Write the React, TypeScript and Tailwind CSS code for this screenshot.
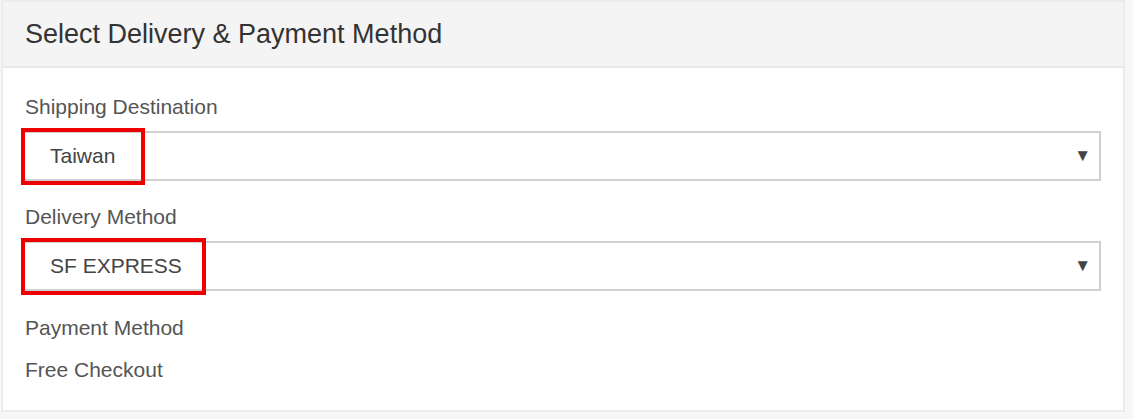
import { ReactNode } from "react";

function Field({ label, value, markWidth }: { label: string; value: string; markWidth: number }) {
  return (
    <div>
      <div className="text-[21px] leading-[24px] text-[#555]">{label}</div>
      <div className="relative mt-[12px]">
        <div className="h-[50px] w-[1079px] -ml-[3px] border-2 border-[#cfcfcf] bg-white flex items-center justify-between pl-[26px] pr-[8px]">
          <span className="text-[21px] text-[#444]">{value}</span>
          <span className="text-[17px] text-[#444]">▼</span>
        </div>
        <div
          className="absolute -top-[3px] -left-[4px] h-[57px] border-[4px] border-[#ee0000]"
          style={{ width: markWidth }}
        />
      </div>
    </div>
  );
}

function Panel({ title, children }: { title: string; children: ReactNode }) {
  return (
    <div className="ml-[1px] w-[1124px] border-2 border-[#ececec] bg-white">
      <div className="h-[66px] bg-[#f4f4f4] border-b-2 border-[#e8e8e8] flex items-center px-[22px]">
        <h1 className="text-[27px] text-[#333]">{title}</h1>
      </div>
      <div className="px-[22px] pt-[27px] pb-[28px]">{children}</div>
    </div>
  );
}

export default function App() {
  return (
    <div className="w-[1133px] h-[419px] bg-[#f7f7f9] font-['Liberation_Sans',Arial,sans-serif]">
      <Panel title="Select Delivery & Payment Method">
        <Field label="Shipping Destination" value="Taiwan" markWidth={124} />
        <div className="mt-[24px]">
          <Field label="Delivery Method" value="SF EXPRESS" markWidth={185} />
        </div>
        <div className="mt-[25px] text-[21px] leading-[24px] text-[#555]">Payment Method</div>
        <div className="mt-[18px] text-[21px] leading-[24px] text-[#555]">Free Checkout</div>
      </Panel>
    </div>
  );
}
